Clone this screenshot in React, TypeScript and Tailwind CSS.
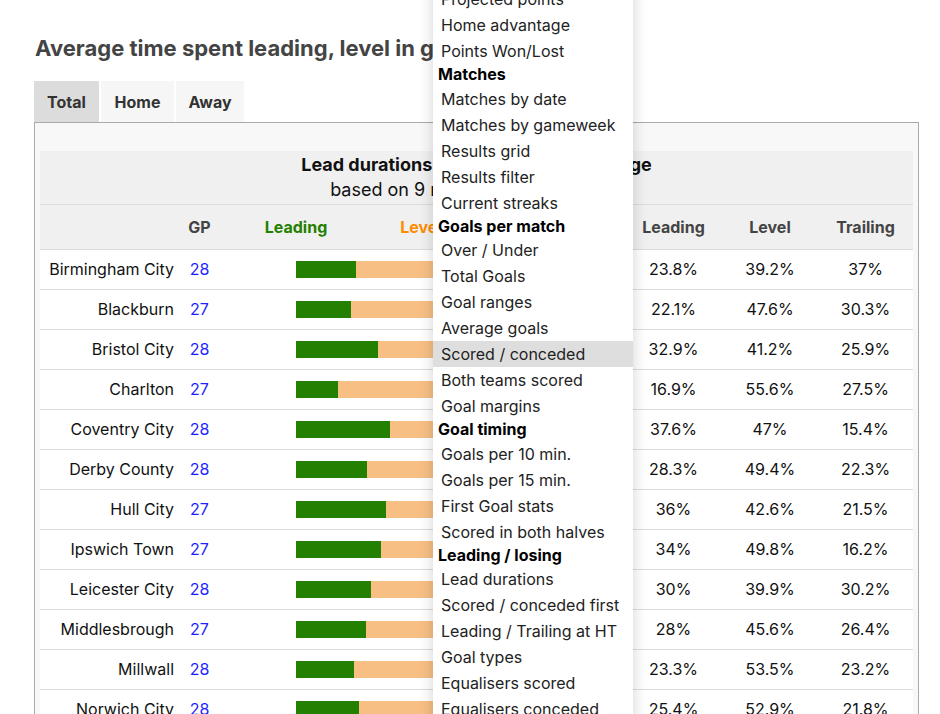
import React from "react";

type Row = { team: string; gp: number; lead: number; level: number; trail: number };

const rows: Row[] = [
  { team: "Birmingham City", gp: 28, lead: 23.8, level: 39.2, trail: 37 },
  { team: "Blackburn", gp: 27, lead: 22.1, level: 47.6, trail: 30.3 },
  { team: "Bristol City", gp: 28, lead: 32.9, level: 41.2, trail: 25.9 },
  { team: "Charlton", gp: 27, lead: 16.9, level: 55.6, trail: 27.5 },
  { team: "Coventry City", gp: 28, lead: 37.6, level: 47, trail: 15.4 },
  { team: "Derby County", gp: 28, lead: 28.3, level: 49.4, trail: 22.3 },
  { team: "Hull City", gp: 27, lead: 36, level: 42.6, trail: 21.5 },
  { team: "Ipswich Town", gp: 27, lead: 34, level: 49.8, trail: 16.2 },
  { team: "Leicester City", gp: 28, lead: 30, level: 39.9, trail: 30.2 },
  { team: "Middlesbrough", gp: 27, lead: 28, level: 45.6, trail: 26.4 },
  { team: "Millwall", gp: 28, lead: 23.3, level: 53.5, trail: 23.2 },
  { team: "Norwich City", gp: 28, lead: 25.4, level: 52.9, trail: 21.8 },
];

type MenuEntry = { label: string; header?: boolean; active?: boolean };

const menu: MenuEntry[] = [
  { label: "Projected points" },
  { label: "Home advantage" },
  { label: "Points Won/Lost" },
  { label: "Matches", header: true },
  { label: "Matches by date" },
  { label: "Matches by gameweek" },
  { label: "Results grid" },
  { label: "Results filter" },
  { label: "Current streaks" },
  { label: "Goals per match", header: true },
  { label: "Over / Under" },
  { label: "Total Goals" },
  { label: "Goal ranges" },
  { label: "Average goals" },
  { label: "Scored / conceded", active: true },
  { label: "Both teams scored" },
  { label: "Goal margins" },
  { label: "Goal timing", header: true },
  { label: "Goals per 10 min." },
  { label: "Goals per 15 min." },
  { label: "First Goal stats" },
  { label: "Scored in both halves" },
  { label: "Leading / losing", header: true },
  { label: "Lead durations" },
  { label: "Scored / conceded first" },
  { label: "Leading / Trailing at HT" },
  { label: "Goal types" },
  { label: "Equalisers scored" },
  { label: "Equalisers conceded" },
  { label: "Clean sheets" },
];

const fmt = (n: number) => `${n}%`;

export default function App() {
  return (
    <div className="relative h-[714px] w-[940px] overflow-hidden bg-white font-['Inter',sans-serif] text-[#111]">
      <div className="pl-[34px] pr-[21px] pt-[34px]">
        <h2 className="ml-[1px] whitespace-nowrap text-[22px] font-bold leading-[28px] text-[#444]">
          Average time spent leading, level in game or trailing
        </h2>
        <div className="mt-[19px] flex gap-[2px] text-[16px] font-bold text-[#333]">
          <div className="flex h-[41px] w-[65px] items-center justify-center bg-[#dcdcdc]">Total</div>
          <div className="flex h-[41px] w-[73px] items-center justify-center bg-[#f6f6f6]">Home</div>
          <div className="flex h-[41px] w-[68px] items-center justify-center bg-[#f6f6f6]">Away</div>
        </div>
        <div className="border border-[#aaa] bg-[#f8f8f8] px-[5px] pt-[28px]">
          <table className="w-[873px] table-fixed border-collapse text-[16px]">
            <colgroup>
              <col className="w-[142px]" />
              <col className="w-[35px]" />
              <col className="w-[408px]" />
              <col className="w-[97px]" />
              <col className="w-[96px]" />
              <col className="w-[95px]" />
            </colgroup>
            <thead>
              <tr className="h-[53px] border-b border-[#dcdcdc] bg-[#f0f0f0]">
                <th colSpan={6} className="text-center text-[18px] leading-[25px]">
                  <div className="font-bold">Lead durations - Championship average</div>
                  <div className="font-normal">based on 9 months (330 matches)</div>
                </th>
              </tr>
              <tr className="h-[45px] border-b border-[#dcdcdc] bg-[#f0f0f0] font-bold text-[#444]">
                <th></th>
                <th className="text-center">GP</th>
                <th>
                  <div className="mx-auto flex w-[250px] justify-between">
                    <span className="flex w-0 justify-center whitespace-nowrap text-[#238000]">Leading</span>
                    <span className="flex w-0 justify-center whitespace-nowrap text-[#ff8c00]">Level</span>
                    <span className="flex w-0 justify-center whitespace-nowrap text-[#d9302c]">Trailing</span>
                  </div>
                </th>
                <th className="text-center">Leading</th>
                <th className="text-center">Level</th>
                <th className="text-center">Trailing</th>
              </tr>
            </thead>
            <tbody>
              {rows.map((r) => (
                <tr key={r.team} className="h-[40px] border-b border-[#dcdcdc] bg-white">
                  <td className="whitespace-nowrap pr-[8px] text-right">{r.team}</td>
                  <td className="text-center text-[#1f1fff]">{r.gp}</td>
                  <td>
                    <div className="mx-auto flex h-[17px] w-[250px]">
                      <div className="h-full bg-[#238000]" style={{ width: `${r.lead}%` }} />
                      <div className="h-full bg-[#f7bf84]" style={{ width: `${r.level}%` }} />
                      <div className="h-full bg-[#e0605a]" style={{ width: `${r.trail}%` }} />
                    </div>
                  </td>
                  <td className="text-center">{fmt(r.lead)}</td>
                  <td className="text-center">{fmt(r.level)}</td>
                  <td className="text-center">{fmt(r.trail)}</td>
                </tr>
              ))}
            </tbody>
          </table>
        </div>
      </div>

      <div className="absolute left-[433px] top-[-14px] w-[200px] bg-white shadow-[0_0_14px_rgba(0,0,0,0.18)]">
        {menu.map((m) =>
          m.header ? (
            <div key={m.label} className="h-[21.5px] whitespace-nowrap pl-[5px] text-[16px] font-bold leading-[21.5px] text-black">
              {m.label}
            </div>
          ) : (
            <div
              key={m.label}
              className={`h-[26px] whitespace-nowrap pl-[8px] text-[16px] leading-[26px] text-[#222] ${m.active ? "bg-[#dedede]" : ""}`}
            >
              {m.label}
            </div>
          )
        )}
      </div>
    </div>
  );
}
